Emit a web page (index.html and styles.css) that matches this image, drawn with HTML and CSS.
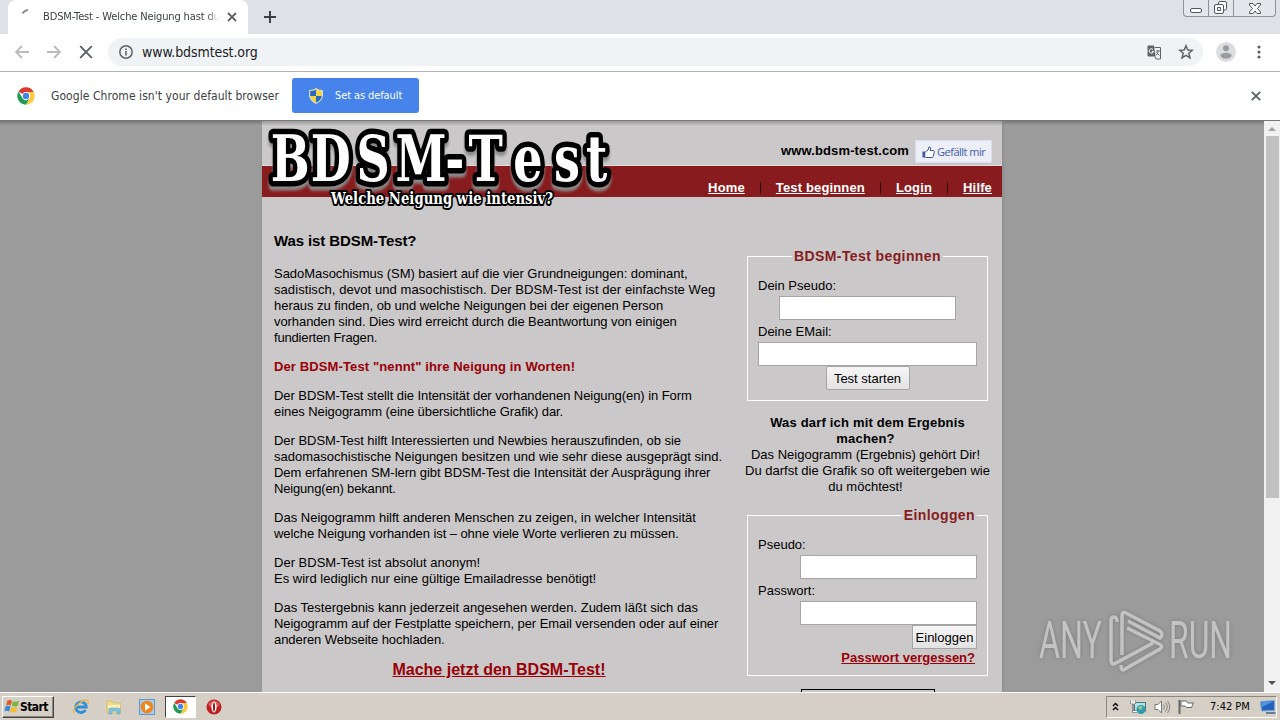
FILE: index.html
```
<!DOCTYPE html>
<html lang="de">
<head>
    <meta charset="UTF-8">
    <title>BDSM-Test - Welche Neigung hast du?</title>
    <link rel="stylesheet" href="styles.css">
</head>
<body>
    <svg class="defs" width="0" height="0">
        <symbol id="chrome" viewBox="0 0 48 48">
            <circle cx="24" cy="24" r="23" fill="#fff"/>
            <path d="M24 24 4 12.5A23 23 0 0 1 44 12.500L44 13H24Z" fill="#dc3b2f"/>
            <path d="M24 13H44.300A23 23 0 0 1 24 47L33.500 29.500Z" fill="#fbca3e"/>
            <path d="M4 12.500A23 23 0 0 0 24 47L33.500 29.500 24 35 14.500 29.500Z" fill="#1f9a55"/>
            <circle cx="24" cy="24" r="11" fill="#fff"/>
            <circle cx="24" cy="24" r="8.500" fill="#4285e8"/>
        </symbol>
    </svg>

    <div class="tabstrip">
        <div class="tab">
            <svg class="spinner" width="16" height="16" viewBox="0 0 16 16"><path d="M2.500 5.500Q4 2.500 8 2" fill="none" stroke="#909090" stroke-width="1.800"/></svg>
            <span class="tab-title">BDSM-Test - Welche Neigung hast du</span>
            <svg class="tab-close" width="10" height="10" viewBox="0 0 10 10"><path d="M1 1 9 9M9 1 1 9" stroke="#5f6368" stroke-width="1.800"/></svg>
        </div>
        <svg class="new-tab" width="12" height="12" viewBox="0 0 12 12"><path d="M6 0V12M0 6H12" stroke="#3c4043" stroke-width="2"/></svg>
        <div class="window-buttons">
            <span class="wb wb-min"><svg width="12" height="6"><rect x=".5" y=".5" width="11" height="4" rx="1.500" fill="#fff" stroke="#50555f"/></svg></span>
            <span class="wb wb-max"><svg width="14" height="14"><path d="M4.500 3.500V2Q4.500 .5 6 .5H11Q12.500 .5 12.500 2V7.500Q12.500 9 11 9H10M2 3.500H8Q9.500 3.500 9.500 5V11Q9.500 12.500 8 12.500H2Q.5 12.500 .5 11V5Q.5 3.500 2 3.500ZM3.500 6.500H6.500V9.500H3.500Z" fill="#fff" stroke="#50555f"/></svg></span>
            <span class="wb wb-close"><svg width="12" height="11" viewBox="0 0 12 11"><path d="M.5.500H4L6 3 8 .5H11.500V2L8.500 5.500 11.500 9V10.500H8L6 8 4 10.500H.5V9L3.500 5.500.5 2Z" fill="#fff" stroke="#50555f"/></svg></span>
        </div>
    </div>

    <div class="toolbar">
        <svg class="tool back" width="16" height="16" viewBox="0 0 16 16"><path d="M15 8H2M8 2 2 8 8 14" fill="none" stroke="#b9bbbe" stroke-width="1.800"/></svg>
        <svg class="tool forward" width="16" height="16" viewBox="0 0 16 16"><path d="M1 8H14M8 2 14 8 8 14" fill="none" stroke="#b9bbbe" stroke-width="1.800"/></svg>
        <svg class="tool stop" width="14" height="14" viewBox="0 0 14 14"><path d="M1.200 1.200 12.800 12.800M12.800 1.200 1.200 12.800" stroke="#5a5e63" stroke-width="1.800"/></svg>
        <div class="omnibox">
            <svg width="14" height="14" viewBox="0 0 14 14"><circle cx="7" cy="7" r="6.200" fill="none" stroke="#5f6368" stroke-width="1.500"/><path d="M7 6V10.500M7 3.500V5" stroke="#5f6368" stroke-width="1.600"/></svg>
            <span class="url">www.bdsmtest.org</span>
            <svg class="translate" width="15" height="15" viewBox="0 0 15 15"><path d="M1 .5H7L8.500 11.500H1.500Q.5 11.500.5 10.500V1.500Z" fill="#5f6368"/><path d="M7.500 2.500H13.500V14H9L8 11.500" fill="none" stroke="#5f6368"/><path d="M6 4.500A2.200 2.200 0 1 0 6.500 6.500H4.800" fill="none" stroke="#fff"/><path d="M9 6H13M11 5V6Q11 9 8.800 10.500M9.500 7.500 12.500 10.500" fill="none" stroke="#5f6368" stroke-width=".9"/></svg>
            <svg class="star" width="16" height="16" viewBox="0 0 16 16"><path d="M8 1.700 9.800 6 14.300 6.300 10.800 9.200 12 13.800 8 11.300 4 13.800 5.200 9.200 1.700 6.300 6.200 6Z" fill="none" stroke="#5f6368" stroke-width="1.500"/></svg>
        </div>
        <svg class="avatar" width="20" height="20" viewBox="0 0 20 20"><circle cx="10" cy="10" r="10" fill="#dcdddf"/><circle cx="10" cy="6.300" r="3" fill="#9a9b9e"/><ellipse cx="10" cy="13.600" rx="5.600" ry="2.900" fill="#9a9b9e"/></svg>
        <svg class="menu-dots" width="4" height="14" viewBox="0 0 4 14"><g fill="#5f6368"><circle cx="2" cy="2" r="1.600"/><circle cx="2" cy="7" r="1.600"/><circle cx="2" cy="12" r="1.600"/></g></svg>
    </div>

    <div class="infobar">
        <svg width="18" height="18"><use href="#chrome"/></svg>
        <span class="info-text">Google Chrome isn't your default browser</span>
        <div class="default-button">
            <svg width="14" height="16" viewBox="0 0 14 16"><path d="M7 .5Q9.500 2.500 13.500 2.500V7Q13.500 12.500 7 15.500.5 12.500.5 7V2.500Q4.500 2.500 7 .5Z" fill="#f4d44a" stroke="#d7dde4"/><path d="M7 1.500V8H1.200V3Q5 3 7 1.500ZM7 8H12.800Q12.300 12.300 7 14.800Z" fill="#2c6bc4"/></svg>
            <span class="default-text">Set as default</span>
        </div>
        <svg class="info-close" width="10" height="10" viewBox="0 0 10 10"><path d="M.8.800 9.200 9.200M9.200.800.8 9.200" stroke="#5f6368" stroke-width="1.900"/></svg>
    </div>

    <div class="viewport">
        <div class="page">
            <div class="header">
                <div class="header-top">
                    <b class="domain">www.bdsm-test.com</b>
                    <span class="like">
                        <svg width="13" height="12" viewBox="0 0 13 12"><path d="M.5 5.500H3.500V11.500H.5Z" fill="#3b5998"/><path d="M3.500 6 6 4 7 1Q8.800.500 8.500 3L8 4.500H11.500Q12.500 4.500 12.300 6L11.300 10.500Q11 11.500 10 11.500H3.500" fill="#fff" stroke="#3b5998"/></svg>
                        <span>Gefällt mir</span>
                    </span>
                </div>
                <div class="nav">
                    <a href="#">Home</a><i></i><a href="#" class="nav-start">Test beginnen</a><i></i><a href="#">Login</a><i></i><a href="#">Hilfe</a>
                </div>
                <svg class="logo" width="360" height="96" viewBox="0 0 360 96">
                    <defs>
                        <linearGradient id="fill" x1="0" y1="0" x2="0" y2="1"><stop offset=".7" stop-color="#fff"/><stop offset="1" stop-color="#e4eaec"/></linearGradient>
                    </defs>
                    <text class="logo-main" transform="scale(.8 1)" x="11 61 118 167 229 258 314 365 405" y="60">BDSM-Test</text>
                    <text class="logo-sub" x="69" y="83" textLength="222" lengthAdjust="spacingAndGlyphs">Welche Neigung wie intensiv?</text>
                </svg>
            </div>

            <div class="columns">
                <div class="content">
                    <h1>Was ist BDSM-Test?</h1>
                    <p>SadoMasochismus (SM) basiert auf die vier Grundneigungen: dominant,<br>
                    <span class="loose">sadistisch, devot und masochistisch. Der BDSM-Test ist der einfachste Weg</span><br>
                    heraus zu finden, ob und welche Neigungen bei der eigenen Person<br>
                    <span class="tight">vorhanden sind. Dies wird erreicht durch die Beantwortung von einigen</span><br>
                    <span class="tighter">fundierten Fragen.</span></p>
                    <p class="claim">Der BDSM-Test "nennt" ihre Neigung in Worten!</p>
                    <p class="tight">Der BDSM-Test stellt die Intensität der vorhandenen Neigung(en) in Form<br>
                    eines Neigogramm (eine übersichtliche Grafik) dar.</p>
                    <p>Der BDSM-Test hilft Interessierten und Newbies herauszufinden, ob sie<br>
                    <span class="normal">sadomasochistische Neigungen besitzen und wie sehr diese ausgeprägt sind.</span><br>
                    Dem erfahrenen SM-lern gibt BDSM-Test die Intensität der Ausprägung ihrer<br>
                    <span class="tighter">Neigung(en) bekannt.</span></p>
                    <p><span class="normal">Das Neigogramm hilft anderen Menschen zu zeigen, in welcher Intensität</span><br>
                    <span class="tight">welche Neigung vorhanden ist – ohne viele Worte verlieren zu müssen.</span></p>
                    <p class="normal">Der BDSM-Test ist absolut anonym!<br>
                    Es wird lediglich nur eine gültige Emailadresse benötigt!</p>
                    <p class="tight"><span class="normal">Das Testergebnis kann jederzeit angesehen werden. Zudem läßt sich das</span><br>
                    Neigogramm auf der Festplatte speichern, per Email versenden oder auf einer<br>
                    anderen Webseite hochladen.</p>
                    <a href="#" class="cta">Mache jetzt den BDSM-Test!</a>
                </div>

                <div class="sidebar">
                    <fieldset class="box-start">
                        <legend>BDSM-Test beginnen</legend>
                        <label>Dein Pseudo:</label>
                        <input type="text" class="center">
                        <label>Deine EMail:</label>
                        <input type="text" class="wide">
                        <button class="center">Test starten</button>
                    </fieldset>
                    <div class="note">
                        <b>Was darf ich mit dem Ergebnis<br><span class="note-end">machen?</span></b><br>
                        <span class="note-end">Das Neigogramm (Ergebnis) gehört Dir!</span><br>
                        Du darfst die Grafik so oft weitergeben wie<br>
                        <span class="note-end">du möchtest!</span>
                    </div>
                    <fieldset class="box-login">
                        <legend>Einloggen</legend>
                        <label>Pseudo:</label>
                        <input type="text">
                        <label>Passwort:</label>
                        <input type="password">
                        <button>Einloggen</button>
                        <a href="#" class="forgot">Passwort vergessen?</a>
                    </fieldset>
                    <div class="banner"></div>
                </div>
            </div>
        </div>

        <div class="scrollbar">
            <svg width="16" height="15"><path d="M4 10 8 6 12 10Z" fill="#a3a3a3"/></svg>
            <div class="thumb"></div>
            <svg width="16" height="18"><path d="M4 7 8 11 12 7Z" fill="#505050"/></svg>
        </div>

        <svg class="watermark" width="210" height="66" viewBox="0 0 210 66">
            <g class="wm-text">
                <text x="4" y="50" textLength="63" lengthAdjust="spacingAndGlyphs">ANY</text>
                <text x="134" y="50" textLength="63" lengthAdjust="spacingAndGlyphs">RUN</text>
            </g>
            <path d="M82 14Q82 9 79 9 76 9 76 13V52Q76 58 81 55L118 35M87 47V8Q87 3 91 5L125 23Q129 26 125 30L93 13M92 20 124 36Q129 38 125 41L90 61Q86 64 86 57" fill="none" stroke="#cacaca" stroke-width="3.500"/>
        </svg>
    </div>

    <div class="taskbar">
        <div class="start">
            <svg width="16" height="15" viewBox="0 0 16 15"><path d="M3.500 1.500Q6 .3 8 1.800L6.800 6.500Q4.500 5 2 6.300Z" fill="#e8582c"/><path d="M9 2.200Q11.500 3.500 15 2L13.500 7Q10.500 8.300 7.800 6.800Z" fill="#78b53a"/><path d="M1.700 7.300Q4.200 6.200 6.500 7.600L5.200 12.500Q3 11 .4 12.300Z" fill="#3a86d8"/><path d="M7.500 8Q10.500 9.500 13.200 8.200L12 13Q9 14.300 6.200 12.800Z" fill="#f5bd2c"/></svg>
            <span>Start</span>
        </div>
        <div class="quick">
            <svg width="18" height="18" viewBox="0 0 18 18"><path d="M13.500 12A5.300 5.300 0 1 1 14.300 9H5" fill="none" stroke="#2f8ed6" stroke-width="2.800"/><path d="M2 15.500C-1 12 9 1.500 15 2 17 2.300 16.500 4 15.500 6" fill="none" stroke="#e8bb45" stroke-width="1.300"/></svg>
            <svg width="18" height="18" viewBox="0 0 18 18"><path d="M2 3H7L8.500 5H15.500V15H2Z" fill="#f1d987" stroke="#d5b85c" stroke-width=".7"/><path d="M3 7H15V10H3Z" fill="#fbf0bd"/><path d="M4 16V11.500Q4 10 6 10H13Q15 10 15 11.500V16H12V13H7V16Z" fill="#7ec1e4" stroke="#559fc8" stroke-width=".5"/></svg>
            <svg width="18" height="18" viewBox="0 0 18 18"><rect x="1.500" y="1.500" width="15" height="15" fill="#a9cbec" stroke="#5f96ce"/><circle cx="9" cy="9" r="6.300" fill="#f08519"/><path d="M7 5.300 12.500 9 7 12.700Z" fill="#fff"/></svg>
            <span class="active-app"><svg width="15" height="15"><use href="#chrome"/></svg></span>
            <svg width="16" height="16" viewBox="0 0 16 16"><circle cx="8" cy="8" r="7.500" fill="#bd1e22"/><path d="M2 5Q8-2 14 5L12 8H4Z" fill="#dc5a54"/><ellipse cx="8" cy="8" rx="2.600" ry="5.400" fill="#fff"/><ellipse cx="8" cy="8" rx="1" ry="4.600" fill="#8f1418"/></svg>
        </div>
        <div class="tray">
            <svg width="7" height="9" viewBox="0 0 7 9"><path d="M1 4 3.500 1.500 6 4M1 8 3.500 5.500 6 8" fill="none" stroke="#000" stroke-width="1.300"/></svg>
            <svg class="net" width="17" height="16" viewBox="0 0 17 16"><rect x="4.500" y="3.500" width="11" height="8.500" fill="#b8e0e4" stroke="#45777c"/><path d="M1 1V4.500H5V1M3 4.500V13H7" fill="none" stroke="#fff" stroke-width="2"/><path d="M.5 1V5H5.500V1M2.500 5V13.500H7M3.500 5V12" fill="none" stroke="#666" stroke-width=".7"/><circle cx="11" cy="10.500" r="4.500" fill="#3299a7"/><path d="M8 8Q11 6 13 8L11 11 9 10Z" fill="#88cda0"/></svg>
            <svg class="sound" width="17" height="16" viewBox="0 0 17 16"><path d="M1 5.500H4L7.500 2V14L4 10.500H1Z" fill="#fff" stroke="#777"/><path d="M9.500 5.500Q11.500 8 9.500 10.500M11.500 3.500Q15 8 11.500 12.500M13.500 2Q18 8 13.500 14" fill="none" stroke="#888"/></svg>
            <svg class="flag" width="17" height="16" viewBox="0 0 17 16"><path d="M1.500 1V15" stroke="#666" stroke-width="2"/><path d="M3 2H8.500L10 4H15.500L13.500 8.500H8.500L7 7H3Z" fill="#fff" stroke="#666"/></svg>
            <span class="clock">7:42 PM</span>
            <svg width="16" height="14" viewBox="0 0 16 14"><path d="M.5 1.500 14.500.500V10.500L1.500 11Z" fill="#2463bd" stroke="#83a8d7"/><path d="M1.500 2 13.500 1.500 2 7Z" fill="#4f93df"/><path d="M6 13H15.500" stroke="#45628c" stroke-width="1.500"/></svg>
        </div>
    </div>
</body>
</html>
```
FILE: styles.css
```
* {
    box-sizing: border-box;
}

body {
    margin: 0;
    width: 1280px;
    height: 720px;
    overflow: hidden;
    display: flex;
    flex-direction: column;
    font-family: "Liberation Sans", Arial, sans-serif;
    font-size: 13px;
    line-height: 16px;
    color: #000;
}

svg {
    display: block;
    flex-shrink: 0;
}

.defs {
    position: absolute;
}

/* Browser chrome */
.tabstrip,
.toolbar,
.infobar,
.start,
.tray {
    font-family: "DejaVu Sans Condensed", "DejaVu Sans", sans-serif;
    font-stretch: condensed;
}

.tabstrip {
    height: 34px;
    background: #dee1e6;
    display: flex;
    align-items: center;
    padding-left: 8px;
    flex-shrink: 0;
}

.tab {
    width: 240px;
    height: 34px;
    background: #fff;
    border-radius: 8px 8px 0 0;
    display: flex;
    align-items: center;
    padding-left: 12px;
}

.spinner {
    margin-top: -3px;
}

.tab-title {
    margin-left: 7px;
    width: 176px;
    overflow: hidden;
    white-space: nowrap;
    font-size: 11px;
    letter-spacing: -0.14px;
    color: #3c4043;
    -webkit-mask-image: linear-gradient(to right, #000 164px, transparent 176px);
}

.tab-close {
    margin-left: 8px;
}

.new-tab {
    margin-left: 16px;
}

.window-buttons {
    margin-left: auto;
    margin-right: 4px;
    align-self: flex-start;
    display: flex;
    height: 17px;
    border: 1px solid #8d929c;
    border-top: 0;
    border-radius: 0 0 4px 4px;
    background: #e3e6eb;
}

.wb {
    display: flex;
    align-items: center;
    justify-content: center;
    width: 25px;
    border-right: 1px solid #8d929c;
}

.wb-min {
    padding-top: 5px;
}

.wb-close {
    width: 41px;
    border-right: 0;
}

.toolbar {
    height: 38px;
    border-bottom: 1px solid #b0b2b5;
    background: #fff;
    display: flex;
    align-items: center;
    flex-shrink: 0;
    padding: 0 0 1px 14px;
}

.forward {
    margin-left: 16px;
}

.stop {
    margin-left: 17px;
}

.omnibox {
    width: 1095px;
    height: 28px;
    margin-left: 15px;
    margin-right: 13px;
    padding: 0 9px 0 11px;
    border-radius: 14px;
    background: #f0f3f5;
    display: flex;
    align-items: center;
}

.url {
    margin-left: 9px;
    font-size: 14px;
    color: #202124;
    letter-spacing: -0.1px;
}

.translate {
    margin-left: auto;
}

.star {
    margin-left: 16px;
}

.menu-dots {
    margin-left: 21px;
}

.infobar {
    height: 49px;
    background: #fff;
    border-bottom: 1px solid #777;
    display: flex;
    align-items: center;
    padding: 0 0 1px 17px;
    flex-shrink: 0;
}

.info-text {
    width: 241px;
    margin-left: 16px;
    white-space: nowrap;
    font-size: 12px;
    letter-spacing: 0.06px;
    color: #3c4043;
}

.default-button {
    width: 127px;
    height: 35px;
    border-radius: 3px;
    background: #4683ea;
    display: flex;
    align-items: center;
    padding-left: 17px;
}

.default-text {
    margin-left: 12px;
    font-size: 11px;
    letter-spacing: -0.1px;
    color: #fff;
    white-space: nowrap;
}

.info-close {
    margin-left: auto;
    margin-right: 19px;
}

/* Page */
.viewport {
    position: relative;
    height: 571px;
    display: flex;
    background: linear-gradient(#777, #9b9b9b 4px);
    overflow: hidden;
    flex-shrink: 0;
}

.page {
    width: 740px;
    margin-left: 262px;
    background: linear-gradient(#999, #cbc8c9 5px);
    box-shadow: 1px 0 3px #888;
}

.header {
    position: relative;
    height: 76px;
}

.header-top {
    height: 45px;
    padding: 19px 10px 0 0;
    display: flex;
    justify-content: flex-end;
    border-bottom: 1px solid #e3dcdc;
}

.domain {
    margin: 3px 6px 0 0;
    letter-spacing: 0.12px;
}

.like {
    width: 77px;
    height: 23px;
    background: #eceef8;
    border: 1px solid #dadff0;
    display: flex;
    align-items: center;
    padding-left: 6px;
    color: #4661a1;
    font-family: "Open Sans", sans-serif;
    font-size: 11px;
    letter-spacing: -0.5px;
    white-space: nowrap;
}

.like span {
    margin-left: 2px;
}

.nav {
    height: 31px;
    background: #871b1d;
    display: flex;
    justify-content: flex-end;
    align-items: center;
    padding: 12px 10px 0 0;
    font-weight: bold;
    letter-spacing: 0.15px;
}

.nav a {
    color: #fff;
}

.nav i {
    width: 1px;
    height: 12px;
    margin: 0 15px;
    background: #2a0909;
}

.logo {
    position: absolute;
    left: 0;
    top: 0;
}

.logo-main,
.logo-sub {
    font-family: "DejaVu Serif Condensed", "DejaVu Serif", serif;
    font-stretch: condensed;
    font-weight: bold;
    paint-order: stroke;
    stroke: #000;
    stroke-linejoin: round;
    fill: #fff;
}

.logo-main {
    font-size: 64px;
    stroke-width: 11px;
    fill: url(#fill);
    filter: drop-shadow(0 4px 1.5px #8a8a8a);
}

.logo-sub {
    font-size: 17px;
    stroke-width: 4px;
}

.columns {
    display: flex;
}

.content {
    width: 450px;
    margin-left: 12px;
    padding-top: 36px;
    white-space: nowrap;
}

.content h1 {
    margin: 0 0 17px;
    font-size: 15px;
    line-height: 16px;
    letter-spacing: -0.1px;
}

.content p {
    margin: 0 0 13px;
    letter-spacing: -0.04px;
}

.content .loose {
    letter-spacing: 0.07px;
}

.content .normal {
    letter-spacing: 0.01px;
}

.content .tight {
    letter-spacing: -0.07px;
}

.content .tighter {
    letter-spacing: -0.17px;
}

.content .claim {
    color: #990007;
    font-weight: bold;
    letter-spacing: 0.12px;
}

.cta {
    display: block;
    text-align: center;
    margin-top: 14px;
    color: #990007;
    font-size: 16px;
    font-weight: bold;
}

.sidebar {
    width: 241px;
    margin-left: 23px;
    padding-top: 51px;
}

fieldset {
    margin: 0;
    padding: 13px 10px 0;
    border: 1px solid #fff;
    height: 153px;
}

.box-login {
    height: 169px;
}

legend {
    margin: 0 auto;
    padding: 0 2px;
    height: 16px;
    font-size: 14px;
    font-weight: bold;
    letter-spacing: 0.4px;
    color: #871b1d;
}

.box-login legend {
    margin-right: 0;
}

label {
    display: block;
    padding-top: 1px;
    margin-bottom: 2px;
}

input {
    display: block;
    width: 177px;
    height: 24px;
    margin: 0 0 3px auto;
    border: 1px solid #a5a5a5;
    background: #fff;
}

input.wide {
    width: 219px;
}

input.center,
button.center {
    margin-left: auto;
    margin-right: auto;
}

button {
    display: block;
    width: 65px;
    height: 24px;
    margin: -3px 0 0 auto;
    padding: 1px 0 0;
    border: 1px solid #a5a5a5;
    background: linear-gradient(#f6f6f6, #e2e2e2);
    font: inherit;
    white-space: nowrap;
}

button.center {
    width: 84px;
    border-radius: 2px;
}

.forgot {
    display: block;
    text-align: right;
    padding: 1px 2px 0 0;
    color: #990007;
    font-weight: bold;
}

.note {
    margin: 14px -5px 12px;
    text-align: center;
    white-space: nowrap;
}

.note b {
    letter-spacing: 0.18px;
}

.note-end {
    padding-right: 4px;
}

.banner {
    width: 134px;
    height: 40px;
    margin: 13px 0 0 54px;
    border: 1px solid #000;
}

.scrollbar {
    width: 16px;
    margin-left: auto;
    background: #f1f1f1;
    display: flex;
    flex-direction: column;
}

.thumb {
    height: 362px;
    margin: 0 1px auto 2px;
    background: #c1c1c1;
}

.watermark {
    position: absolute;
    left: 1035px;
    top: 487px;
    opacity: 0.85;
    filter: drop-shadow(0 0 2px #777);
}

.wm-text {
    font-family: Roboto, sans-serif;
    font-size: 52px;
    fill: #cacaca;
}

/* Taskbar */
.taskbar {
    height: 28px;
    border-top: 1px solid #fff;
    background: #d5cfc6;
    display: flex;
    align-items: center;
    flex-shrink: 0;
}

.start {
    width: 52px;
    height: 22px;
    margin-left: 2px;
    display: flex;
    align-items: center;
    padding-left: 1px;
    border: 1px solid;
    border-color: #fff #444 #444 #fff;
    box-shadow: inset -1px -1px #8c8880;
    font-size: 12px;
    font-weight: bold;
    letter-spacing: -0.6px;
}

.quick {
    display: flex;
    align-items: center;
    gap: 15px;
    margin-left: 18px;
}

.active-app {
    width: 31px;
    height: 22px;
    margin: 0 -5px 0 -6px;
    background: #fff;
    border: 1px solid;
    border-color: #444 #fff #fff #444;
    display: flex;
    align-items: center;
    justify-content: center;
}

.tray {
    width: 171px;
    height: 22px;
    margin-left: auto;
    margin-right: 3px;
    border: 1px solid;
    border-color: #8c8880 #fff #fff #8c8880;
    display: flex;
    align-items: center;
    padding-left: 5px;
    font-size: 11px;
}

.net {
    margin-left: 11px;
}

.sound,
.flag {
    margin-left: 7px;
}

.clock {
    width: 51px;
    margin-left: 15px;
    white-space: nowrap;
}
```
